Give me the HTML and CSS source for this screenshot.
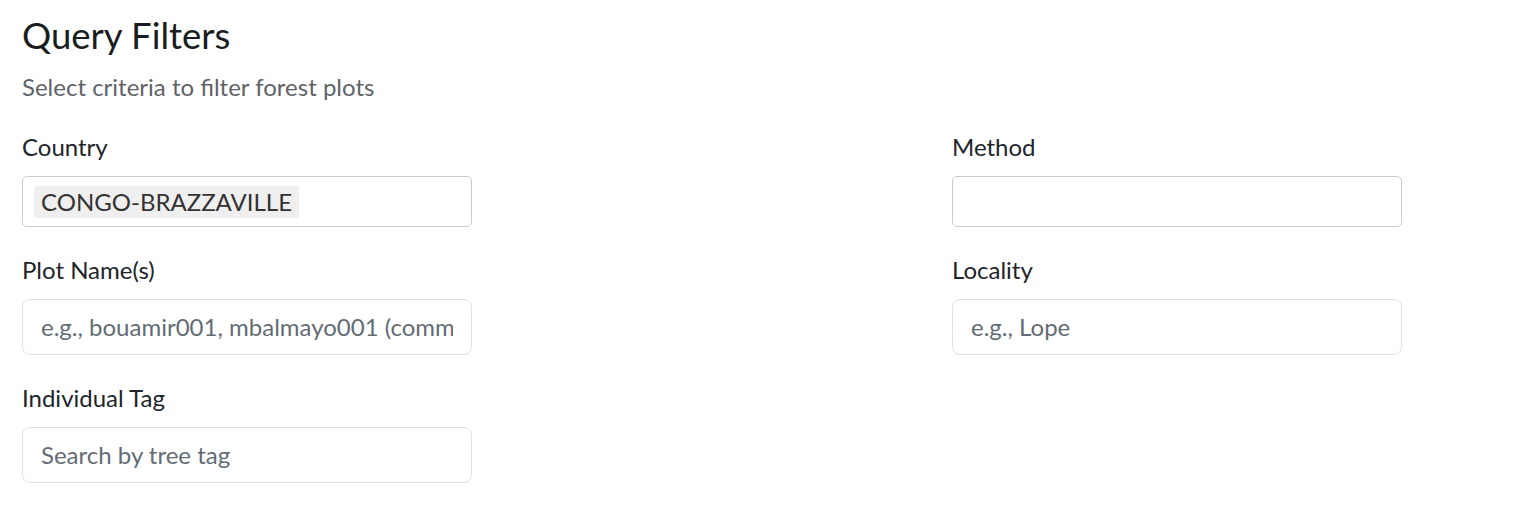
FILE: index.html
```html
<!DOCTYPE html>
<html>
<head>
<meta charset="utf-8">
<link rel="stylesheet" href="styles.css">
</head>
<body>
<div class="panel">
  <h2 class="title">Query Filters</h2>
  <p class="subtitle">Select criteria to filter forest plots</p>
  <div class="grid">
    <div class="col">
      <div class="field">
        <label class="label">Country</label>
        <div class="select"><span class="chip">CONGO-BRAZZAVILLE</span></div>
      </div>
      <div class="field">
        <label class="label">Plot Name(s)</label>
        <div class="text-input"><span class="placeholder">e.g., bouamir001, mbalmayo001 (comma separated)</span></div>
      </div>
      <div class="field">
        <label class="label">Individual Tag</label>
        <div class="text-input"><span class="placeholder">Search by tree tag</span></div>
      </div>
    </div>
    <div class="col">
      <div class="field">
        <label class="label">Method</label>
        <div class="select"></div>
      </div>
      <div class="field">
        <label class="label">Locality</label>
        <div class="text-input"><span class="placeholder">e.g., Lope</span></div>
      </div>
    </div>
  </div>
</div>
</body>
</html>
```
FILE: styles.css
```css
html, body {
  margin: 0;
  padding: 0;
  background: #ffffff;
}
body {
  font-family: Lato, "Open Sans", sans-serif;
  color: #212529;
}
.panel {
  padding: 13px 22px 0 22px;
}
.title {
  font-size: 36.5px;
  font-weight: 400;
  line-height: 44px;
  margin: 0 0 12px 0;
  color: #1a1d20;
}
.subtitle {
  font-size: 24px;
  line-height: 36px;
  margin: 0 0 24px 0;
  color: #5f6368;
}
.grid {
  display: grid;
  grid-template-columns: 930px 1fr;
}
.col {
  display: flex;
  flex-direction: column;
  gap: 25px;
}
.field {
  display: flex;
  flex-direction: column;
  width: 450px;
}
.label {
  font-size: 24px;
  line-height: 36px;
  margin-bottom: 11px;
  color: #212529;
}
.select {
  box-sizing: border-box;
  height: 51px;
  border: 1px solid #cccccc;
  border-radius: 5px;
  padding: 8px 11px;
  display: flex;
  align-items: center;
  background: #fff;
}
.chip {
  background: #efefef;
  border-radius: 3px;
  padding: 0 7px;
  font-size: 24px;
  line-height: 32px;
  color: #333333;
}
.text-input {
  box-sizing: border-box;
  height: 56px;
  border: 1px solid #dee2e6;
  border-radius: 8px;
  padding: 0 18px;
  display: flex;
  align-items: center;
  background: #fff;
}
.placeholder {
  flex: 1;
  min-width: 0;
  overflow: hidden;
  white-space: nowrap;
  font-size: 24px;
  line-height: 36px;
  color: #636c74;
}
```
